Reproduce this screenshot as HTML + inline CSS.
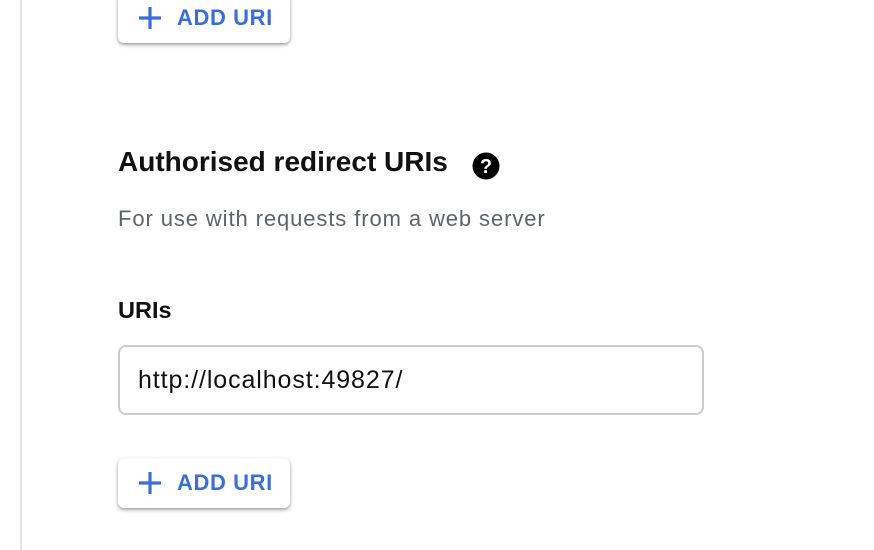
<html><head><style>
body{margin:0;width:874px;height:550px;background:#fff;position:relative;overflow:hidden;font-family:"Liberation Sans",sans-serif}
.vl{position:absolute;left:20px;top:0;width:2px;height:550px;background:#e6e6e6}
.btn{position:absolute;left:118px;width:172px;height:50px;background:#fff;border-radius:6px;box-shadow:0 2px 4px rgba(0,0,0,.3),0 1px 2px rgba(0,0,0,.15);color:#3a6fd8;font-size:22px;font-weight:bold;letter-spacing:.6px;display:flex;align-items:center}
.btn svg{margin-left:20px;margin-right:15px}
.t{position:absolute;left:118px;white-space:nowrap}
.in{position:absolute;left:118px;top:345px;width:564px;height:66px;border:2px solid #ccc;border-radius:8px;font-size:25px;letter-spacing:.9px;line-height:66px;padding-left:18px;color:#111}
</style></head><body>
<div class="vl"></div>
<div class="btn" style="top:-7px"><svg width="24" height="24" viewBox="0 0 24 24"><path d="M12 1v22M1 12h22" stroke="#3a6fd8" stroke-width="3.2"/></svg>ADD URI</div>
<div class="t" style="top:146px;font-size:28px;font-weight:bold;color:#111;letter-spacing:0px">Authorised redirect URIs</div>
<svg style="position:absolute;left:472px;top:152px" width="28" height="28" viewBox="0 0 28 28"><circle cx="14" cy="14" r="13.5" fill="#000"/><text x="14" y="21" text-anchor="middle" font-family="Liberation Sans" font-weight="bold" font-size="20" fill="#fff">?</text></svg>
<div class="t" style="top:206px;font-size:22px;letter-spacing:.9px;color:#5f6368">For use with requests from a web server</div>
<div class="t" style="top:297px;font-size:23.5px;font-weight:bold;color:#111">URIs</div>
<div class="in">http://localhost:49827/</div>
<div class="btn" style="top:458px"><svg width="24" height="24" viewBox="0 0 24 24"><path d="M12 1v22M1 12h22" stroke="#3a6fd8" stroke-width="3.2"/></svg>ADD URI</div>
</body></html>
